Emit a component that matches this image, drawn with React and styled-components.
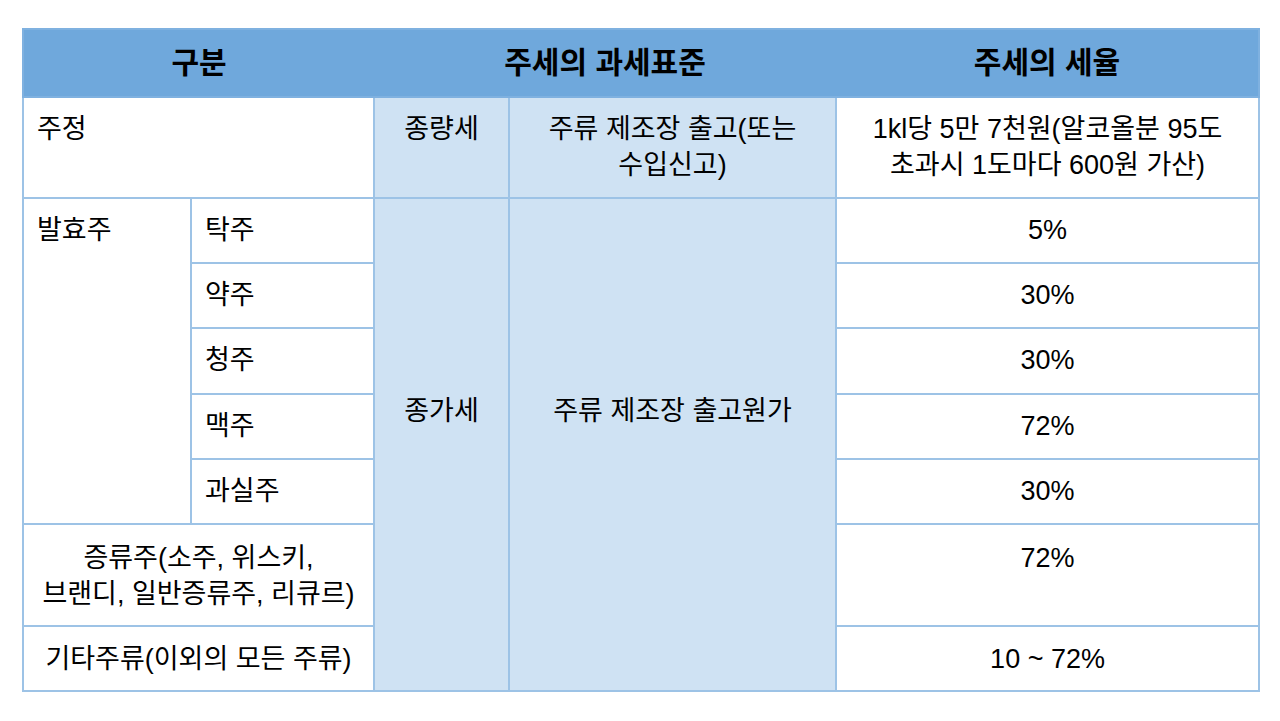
import React from "react";
import styled, { createGlobalStyle } from "styled-components";

const GlobalStyle = createGlobalStyle`
  html, body {
    margin: 0;
    padding: 0;
    background: #ffffff;
  }
  body {
    font-family: "Liberation Sans", "Noto Sans CJK KR", sans-serif;
    color: #000000;
  }
`;

const Page = styled.div`
  width: 1280px;
  height: 721px;
  padding: 28px 0 0 22px;
  box-sizing: border-box;
`;

const Table = styled.table`
  border-collapse: collapse;
  table-layout: fixed;
  width: 1236px;
  font-size: 27px;
  line-height: 36px;
`;

const HeadRow = styled.tr`
  height: 68px;
  background: #6fa8dc;
`;

const HeadCell = styled.th`
  padding: 0;
  font-size: 30px;
  font-weight: 700;
  text-align: center;
  vertical-align: middle;
  border: 2px solid #7fb1e0;
  border-left-width: 0;
  border-right-width: 0;
  &:first-child { border-left-width: 2px; }
  &:last-child { border-right-width: 2px; }
`;

const Row = styled.tr`
  height: ${(p) => p.$h}px;
`;

const Cell = styled.td`
  border: 2px solid #9dc3e6;
  padding: ${(p) => p.$pt ?? 13}px ${(p) => (p.$align === "left" ? "13px" : "2px")} 0;
  text-align: ${(p) => p.$align || "center"};
  vertical-align: top;
  background: ${(p) => (p.$tint ? "#cfe2f3" : "#ffffff")};
  font-weight: 400;
  box-sizing: border-box;
  white-space: pre-line;
`;

const Col = styled.col`
  width: ${(p) => p.$w}px;
`;

const brews = ["탁주", "약주", "청주", "맥주", "과실주"];
const brewRates = ["5%", "30%", "30%", "72%", "30%"];

export default function App() {
  return (
    <>
      <GlobalStyle />
      <Page>
        <Table>
          <colgroup>
            <Col $w={168} />
            <Col $w={183} />
            <Col $w={135} />
            <Col $w={327} />
            <Col $w={423} />
          </colgroup>
          <thead>
            <HeadRow>
              <HeadCell colSpan={2}>구분</HeadCell>
              <HeadCell colSpan={2}>주세의 과세표준</HeadCell>
              <HeadCell>주세의 세율</HeadCell>
            </HeadRow>
          </thead>
          <tbody>
            <Row $h={101}>
              <Cell colSpan={2} $align="left">주정</Cell>
              <Cell $tint>종량세</Cell>
              <Cell $tint>{"주류 제조장 출고(또는\n수입신고)"}</Cell>
              <Cell>{"1kl당 5만 7천원(알코올분 95도\n초과시 1도마다 600원 가산)"}</Cell>
            </Row>
            {brews.map((b, i) => (
              <Row $h={i === 2 ? 66 : 65} key={b}>
                {i === 0 && (
                  <Cell rowSpan={5} $align="left">발효주</Cell>
                )}
                <Cell $align="left">{b}</Cell>
                {i === 0 && (
                  <>
                    <Cell rowSpan={7} $tint $pt={194}>종가세</Cell>
                    <Cell rowSpan={7} $tint $pt={194}>주류 제조장 출고원가</Cell>
                  </>
                )}
                <Cell>{brewRates[i]}</Cell>
              </Row>
            ))}
            <Row $h={102}>
              <Cell colSpan={2} $pt={15}>{"증류주(소주, 위스키,\n브랜디, 일반증류주, 리큐르)"}</Cell>
              <Cell $pt={15}>72%</Cell>
            </Row>
            <Row $h={65}>
              <Cell colSpan={2} $pt={14}>기타주류(이외의 모든 주류)</Cell>
              <Cell $pt={14}>10 ~ 72%</Cell>
            </Row>
          </tbody>
        </Table>
      </Page>
    </>
  );
}
